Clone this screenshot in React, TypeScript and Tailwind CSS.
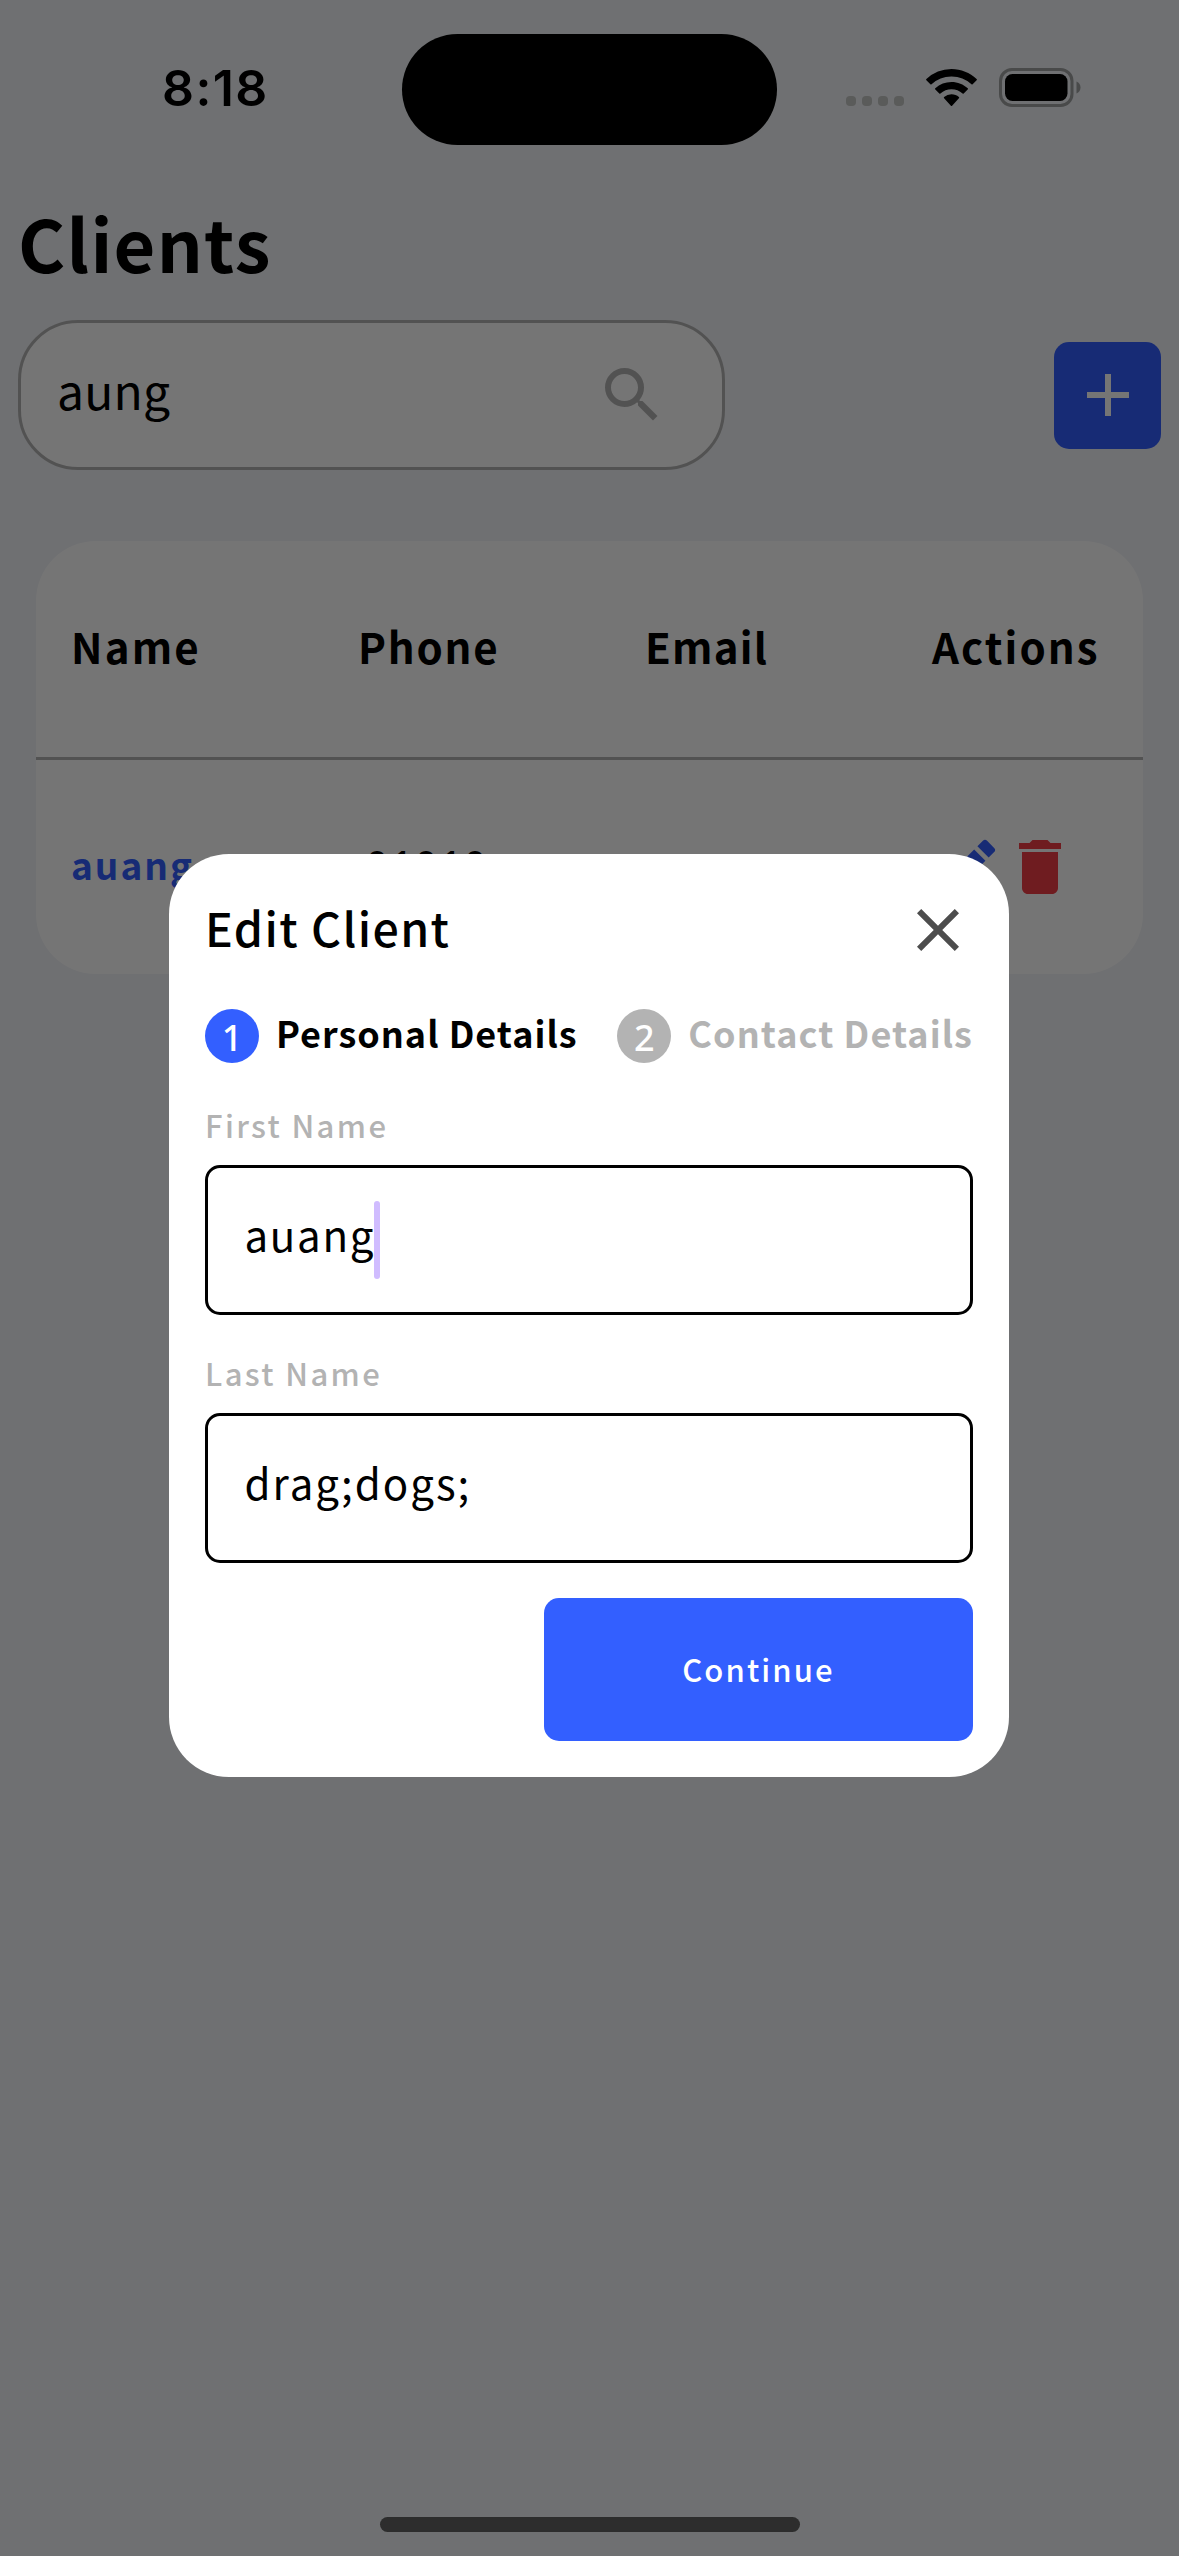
import { MdAdd, MdClose, MdDelete, MdEdit, MdSearch } from "react-icons/md";

function StatusBar() {
  return (
    <div className="absolute inset-x-0 top-0 flex h-[178px] items-start">
      <div className="w-[402px] pt-[58px] pl-[162px] font-['Inter',sans-serif] text-[50px] leading-[60px] font-semibold tracking-[1.4px] text-black">
        8:18
      </div>
      <div className="mt-[33.5px] h-[111px] w-[375px] rounded-full bg-black" />
      <div className="mt-[67px] ml-[69px] flex items-start">
        <div className="mt-[29px] flex gap-[6px]">
          <span className="h-[10px] w-[10px] rounded-[4px] bg-[#5a5b5a]" />
          <span className="h-[10px] w-[10px] rounded-[4px] bg-[#5a5b5a]" />
          <span className="h-[10px] w-[10px] rounded-[4px] bg-[#5a5b5a]" />
          <span className="h-[10px] w-[10px] rounded-[4px] bg-[#5a5b5a]" />
        </div>
        <svg className="mt-[2px] ml-[22px] h-[38px] w-[51px]" viewBox="0 0 51 38" fill="black">
          <path d="M25.5 0C35 0 43.9 3.7 50.6 10a.8.8 0 0 1 0 1.2l-4 4a.8.8 0 0 1-1.1 0A29 29 0 0 0 25.5 7.4 29 29 0 0 0 5.5 15.2a.8.8 0 0 1-1.1 0l-4-4a.8.8 0 0 1 0-1.2A36.5 36.5 0 0 1 25.5 0Z" />
          <path d="M25.5 12.9c6.2 0 11.9 2.4 16.2 6.3a.8.8 0 0 1 0 1.2l-4 4.1a.8.8 0 0 1-1.1 0 16.4 16.4 0 0 0-22.2 0 .8.8 0 0 1-1.1 0l-4-4.1a.8.8 0 0 1 0-1.2 24 24 0 0 1 16.2-6.3Z" />
          <path d="M25.5 25.3c2.8 0 5.4 1 7.4 2.7a.8.8 0 0 1 0 1.2l-6.8 7.5a.8.8 0 0 1-1.2 0l-6.8-7.5a.8.8 0 0 1 0-1.2 11.4 11.4 0 0 1 7.4-2.7Z" />
        </svg>
        <svg className="mt-[1px] ml-[22px] h-[39px] w-[82px]" viewBox="0 0 82 39">
          <rect x="1.5" y="1.5" width="71.5" height="36" rx="11.5" fill="none" stroke="#494a4a" strokeWidth="3" />
          <rect x="6" y="6" width="62.5" height="27" rx="7.5" fill="black" />
          <path d="M77.5 13.5c2.4 1 4 3.3 4 6s-1.6 5-4 6Z" fill="#494a4a" />
        </svg>
      </div>
    </div>
  );
}

function ClientsPage() {
  return (
    <div className="px-[18px] pt-[202px]">
      <h1 className="text-[72px] leading-[80px] font-bold tracking-[1.25px]">Clients</h1>

      <div className="mt-[38px] flex h-[150px] items-center justify-between">
        <div className="flex h-full w-[707px] items-center justify-between rounded-[60px] border-[3px] border-[#b4b4b4] bg-white pr-[54px] pl-[36px]">
          <span className="pb-[12px] text-[48px] leading-[60px] tracking-[0.2px]">aung</span>
          <MdSearch className="size-[72px] text-[#b4b4b4]" />
        </div>
        <button className="flex size-[107px] items-center justify-center rounded-[15px] bg-[#335fff] text-white">
          <MdAdd className="size-[72px]" />
        </button>
      </div>

      <div className="mx-[18px] mt-[71px] h-[433px] overflow-hidden rounded-[60px] bg-white">
        <div className="grid h-[219px] grid-cols-[287px_287px_287px_auto] items-center border-b-[3px] border-[#b4b4b4] pb-[6px] pl-[35px] text-[42px] leading-[54px] font-bold">
          <span className="tracking-[2.2px]">Name</span>
          <span className="tracking-[1.8px]">Phone</span>
          <span className="tracking-[1.2px]">Email</span>
          <span className="tracking-[2.1px]">Actions</span>
        </div>
        <div className="grid h-[214px] grid-cols-[287px_287px_287px_auto] items-center pl-[35px] text-[37px] leading-[48px]">
          <span className="pb-[6px] font-bold tracking-[2px] text-[#335fff]">auang</span>
          <span className="pb-[5px] pl-[8px] font-['Noto_Sans',sans-serif] text-[39px] font-medium tracking-[2.2px]">01010</span>
          <span />
          <div className="flex">
            <MdEdit className="size-[72px] text-[#335fff]" />
            <MdDelete className="size-[72px] text-[#f23d47]" />
          </div>
        </div>
      </div>
    </div>
  );
}

function EditClientModal() {
  return (
    <div className="h-[923px] w-[840px] rounded-[60px] bg-white px-[36px] pt-[40px]">
      <div className="-mr-[1px] flex h-[72px] items-center justify-between">
        <h2 className="pb-[6px] text-[46.5px] leading-[60px] font-medium tracking-[1.4px]">Edit Client</h2>
        <MdClose className="size-[72px] text-[#4d4d4d]" />
      </div>

      <div className="mt-[43px] flex h-[54px] items-center justify-between text-[36px] leading-[54px] whitespace-nowrap">
        <div className="flex items-center gap-[17px]">
          <span className="size-[54px] rounded-full bg-[#335fff] text-center font-['Noto_Sans',sans-serif] leading-[58px] font-medium text-white">1</span>
          <span className="pb-[8px] font-bold tracking-[1px]">Personal Details</span>
        </div>
        <div className="flex items-center gap-[17px] text-[#b3b3b3]">
          <span className="size-[54px] rounded-full bg-[#b3b3b3] text-center font-['Noto_Sans',sans-serif] leading-[58px] font-medium text-white">2</span>
          <span className="pb-[8px] font-bold tracking-[1.07px]">Contact Details</span>
        </div>
      </div>

      <div className="mt-[41.5px] text-[31px] leading-[40px] font-medium tracking-[2.35px] text-[#b3b3b3]">First Name</div>
      <div className="mt-[20px] flex h-[150.5px] items-center rounded-[15px] border-[3px] border-black pl-[36.5px]">
        <span className="pb-[12px] text-[42px] leading-[54px] tracking-[1.7px]">auang</span>
        <span className="-ml-[1px] h-[78px] w-[6px] rounded-full bg-[#d0bcff]" />
      </div>

      <div className="mt-[37.5px] text-[31px] leading-[40px] font-medium tracking-[2.35px] text-[#b3b3b3]">Last Name</div>
      <div className="mt-[20px] flex h-[150.5px] items-center rounded-[15px] border-[3px] border-black pl-[36.5px]">
        <span className="pb-[12px] text-[42px] leading-[54px] tracking-[2px]">drag;dogs;</span>
      </div>

      <button className="mt-[35px] ml-auto flex h-[143px] w-[429px] items-center justify-center rounded-[15px] bg-[#335fff] pb-[2px] text-[31px] leading-[40px] font-medium tracking-[2.1px] text-white">
        Continue
      </button>
    </div>
  );
}

export default function App() {
  return (
    <div className="relative h-[2556px] w-[1179px] overflow-hidden bg-[#f2f4f8] font-['Noto_Sans_CJK_SC',sans-serif] text-black">
      <ClientsPage />
      <div className="absolute inset-0 flex items-center justify-center bg-black/54 pt-[75px] pr-[1px]">
        <EditClientModal />
      </div>
      <StatusBar />
      <div className="absolute inset-x-0 bottom-[24px] mx-auto h-[15px] w-[420px] rounded-full bg-[#2d2d2d]" />
    </div>
  );
}
